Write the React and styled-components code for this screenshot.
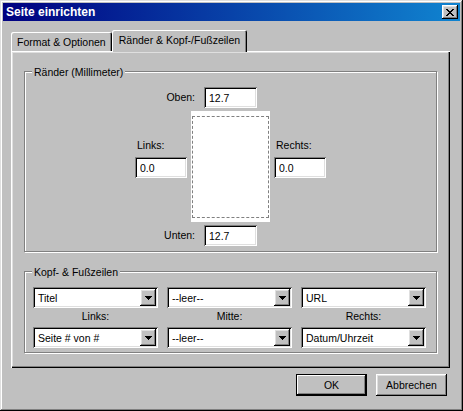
import React from 'react';
import styled, { createGlobalStyle } from 'styled-components';

const GlobalStyle = createGlobalStyle`
  html, body {
    margin: 0;
    padding: 0;
    background: #c0c0c0;
  }
  body {
    font-family: "Liberation Sans", Arial, sans-serif;
    font-size: 10.5px;
    color: #000;
  }
  * { box-sizing: border-box; }
`;

const raised = 'inset -1px -1px #000, inset 1px 1px #fff, inset -2px -2px #808080, inset 2px 2px #dfdfdf';
const sunken = 'inset 1px 1px #808080, inset -1px -1px #fff, inset 2px 2px #000, inset -2px -2px #dfdfdf';

const Window = styled.div`
  width: 463px;
  height: 411px;
  padding: 3px;
  background: #c0c0c0;
  box-shadow: inset -1px -1px #000, inset 1px 1px #dfdfdf, inset -2px -2px #808080, inset 2px 2px #fff;
  display: flex;
  flex-direction: column;
`;

const TitleBar = styled.div`
  height: 18px;
  display: flex;
  align-items: center;
  justify-content: space-between;
  padding: 0 2px 0 3px;
  background: linear-gradient(to right, #000080, #1084d0);
  color: #fff;
  font-weight: bold;
  font-size: 12px;
`;

const CloseButton = styled.button`
  width: 16px;
  height: 14px;
  padding: 0;
  border: none;
  background: #c0c0c0;
  box-shadow: ${raised};
  display: flex;
  align-items: center;
  justify-content: center;
`;

const Body = styled.div`
  flex: 1;
  display: flex;
  flex-direction: column;
  padding: 9px 10px 0 8px;
`;

const TabRow = styled.div`
  display: flex;
  align-items: flex-end;
  height: 21px;
  position: relative;
  z-index: 1;
`;

const Tab = styled.div`
  height: ${p => (p.$active ? 22 : 19)}px;
  margin-bottom: ${p => (p.$active ? -1 : 0)}px;
  padding: 0 ${p => (p.$active ? 7 : 6)}px ${p => (p.$active ? 2 : 0)}px;
  display: flex;
  align-items: center;
  background: #c0c0c0;
  border-radius: 2px 2px 0 0;
  box-shadow: inset 1px 1px #fff, inset -1px 0 #000, inset -2px 0 #808080;
  position: relative;
  z-index: ${p => (p.$active ? 2 : 1)};
`;

const Panel = styled.div`
  height: 317px;
  background: #c0c0c0;
  box-shadow: inset 1px 1px #fff, inset -1px -1px #000, inset -2px -2px #808080, inset 2px 2px #dfdfdf;
  padding: 20px 13px 0;
`;

const Group = styled.div`
  position: relative;
  border: 1px solid #808080;
  box-shadow: inset 1px 1px #fff, 1px 1px #fff;
  padding: ${p => p.$pad};
  & + & {
    margin-top: 19px;
  }
`;

const GroupTitle = styled.span`
  position: absolute;
  top: -6px;
  left: 7px;
  padding: 0 2px;
  line-height: 13px;
  background: #c0c0c0;
`;

const MarginGrid = styled.div`
  display: grid;
  grid-template-columns: 52px 79px 52px;
  column-gap: 4px;
  row-gap: 3px;
  width: max-content;
`;

const FieldRow = styled.div`
  grid-column: 1 / 3;
  display: flex;
  align-items: center;
  justify-content: flex-end;
  gap: 9px;
  padding-right: 13px;
`;

const SideCol = styled.div`
  display: flex;
  flex-direction: column;
  padding-top: 28px;
`;

const Label = styled.span`
  line-height: 13px;
`;

const SideLabel = styled(Label)`
  padding-left: 2px;
  margin-bottom: 5px;
`;

const TextInput = styled.input`
  width: ${p => p.$w}px;
  height: 21px;
  border: none;
  outline: none;
  padding: 0 0 0 5px;
  font: inherit;
  color: #000;
  background: #fff;
  box-shadow: ${sunken};
`;

const Page = styled.div`
  height: 111px;
  background: #fff;
  padding: 5px 1px 4px 1px;
  display: flex;
`;

const PageMargins = styled.div`
  flex: 1;
  border: 1px dashed #808080;
`;

const HFGrid = styled.div`
  display: grid;
  grid-template-columns: repeat(3, 125px);
  column-gap: 9px;
`;

const ColLabel = styled.div`
  text-align: center;
  line-height: 13px;
  margin: 2px 0 4px;
`;

const Select = styled.div`
  height: 21px;
  padding: 2px;
  display: flex;
  align-items: center;
  background: #fff;
  box-shadow: ${sunken};
`;

const SelectValue = styled.span`
  flex: 1;
  padding-left: 3px;
  white-space: nowrap;
`;

const DropButton = styled.span`
  width: 16px;
  height: 17px;
  background: #c0c0c0;
  box-shadow: ${raised};
  display: flex;
  align-items: center;
  justify-content: center;
`;

const ButtonRow = styled.div`
  display: flex;
  justify-content: flex-end;
  gap: 9px;
  margin-top: 6px;
  padding-right: 3px;
`;

const Button = styled.button`
  width: 71px;
  height: 22px;
  padding: 0;
  border: none;
  font: inherit;
  color: #000;
  background: #c0c0c0;
  box-shadow: ${p => (p.$default
    ? 'inset 0 0 0 1px #000, inset -2px -2px #000, inset 2px 2px #fff, inset -3px -3px #808080'
    : raised)};
`;

const CloseIcon = () => (
  <svg width="8" height="7" viewBox="0 0 8 7" shapeRendering="crispEdges">
    <path
      fill="#000"
      d="M0 0h2v1h-2z M6 0h2v1h-2z M1 1h2v1h-2z M5 1h2v1h-2z M2 2h4v1h-4z M3 3h2v1h-2z M2 4h4v1h-4z M1 5h2v1h-2z M5 5h2v1h-2z M0 6h2v1h-2z M6 6h2v1h-2z"
    />
  </svg>
);

const ArrowIcon = () => (
  <svg width="7" height="4" viewBox="0 0 7 4" shapeRendering="crispEdges">
    <path fill="#000" d="M0 0h7v1h-7z M1 1h5v1h-5z M2 2h3v1h-3z M3 3h1v1h-1z" />
  </svg>
);

function Combo({ value }) {
  return (
    <Select>
      <SelectValue>{value}</SelectValue>
      <DropButton><ArrowIcon /></DropButton>
    </Select>
  );
}

const kopf = ['Titel', '--leer--', 'URL'];
const fuss = ['Seite # von #', '--leer--', 'Datum/Uhrzeit'];
const spalten = ['Links:', 'Mitte:', 'Rechts:'];

function App() {
  return (
    <Window>
      <GlobalStyle />
      <TitleBar>
        <span>Seite einrichten</span>
        <CloseButton><CloseIcon /></CloseButton>
      </TitleBar>

      <Body>
        <TabRow>
          <Tab>Format &amp; Optionen</Tab>
          <Tab $active>Ränder &amp; Kopf-/Fußzeilen</Tab>
        </TabRow>

        <Panel>
          <Group $pad="15px 0 5px 110px">
            <GroupTitle>Ränder (Millimeter)</GroupTitle>
            <MarginGrid>
              <FieldRow>
                <Label>Oben:</Label>
                <TextInput $w={53} defaultValue="12.7" readOnly />
              </FieldRow>
              <div />
              <SideCol>
                <SideLabel>Links:</SideLabel>
                <TextInput $w={52} defaultValue="0.0" readOnly />
              </SideCol>
              <Page><PageMargins /></Page>
              <SideCol>
                <SideLabel>Rechts:</SideLabel>
                <TextInput $w={52} defaultValue="0.0" readOnly />
              </SideCol>
              <FieldRow>
                <Label>Unten:</Label>
                <TextInput $w={53} defaultValue="12.7" readOnly />
              </FieldRow>
            </MarginGrid>
          </Group>

          <Group $pad="15px 0 4px 8px">
            <GroupTitle>Kopf- &amp; Fußzeilen</GroupTitle>
            <HFGrid>
              {kopf.map((v, i) => <Combo key={'k' + i} value={v} />)}
              {spalten.map(s => <ColLabel key={s}>{s}</ColLabel>)}
              {fuss.map((v, i) => <Combo key={'f' + i} value={v} />)}
            </HFGrid>
          </Group>
        </Panel>

        <ButtonRow>
          <Button $default>OK</Button>
          <Button>Abbrechen</Button>
        </ButtonRow>
      </Body>
    </Window>
  );
}

export default App;
